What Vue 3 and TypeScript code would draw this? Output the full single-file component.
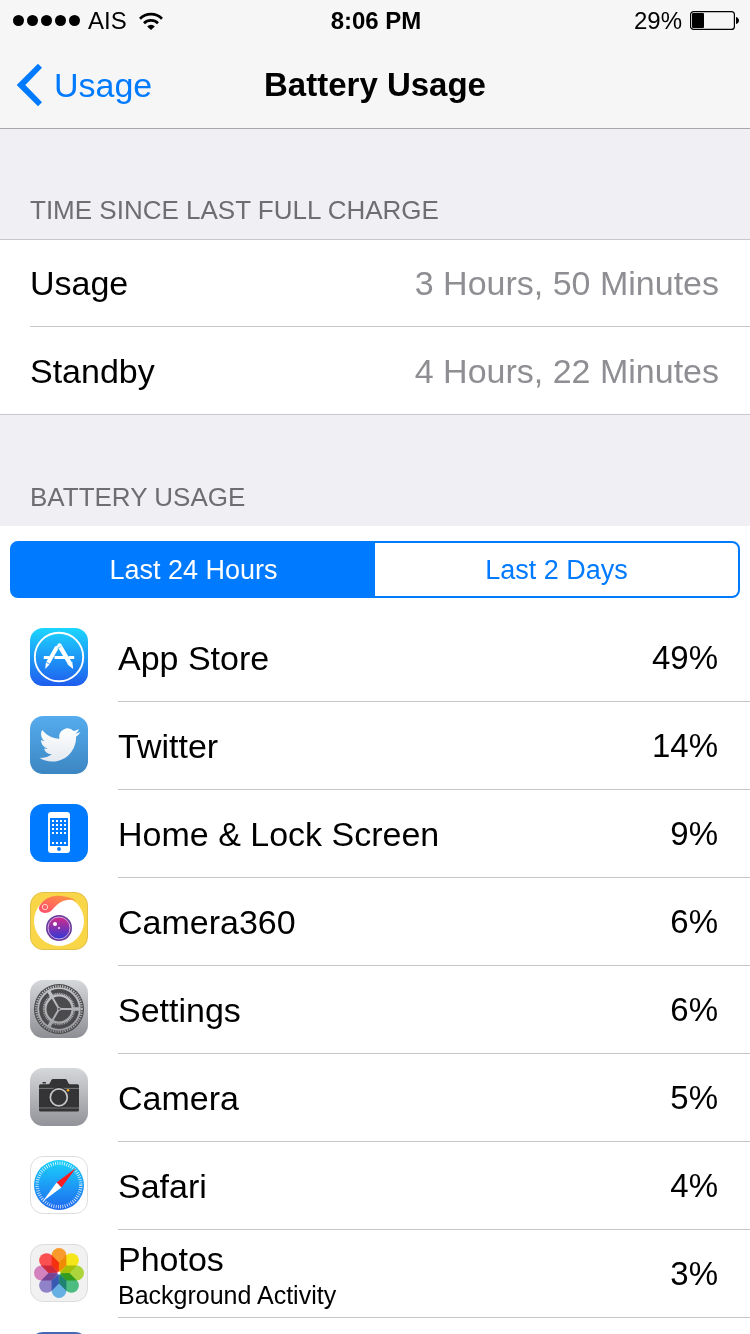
<script setup lang="ts">
import { ref } from 'vue'

type IconName =
  | 'appstore' | 'twitter' | 'homelock' | 'camera360' | 'settings'
  | 'camera' | 'safari' | 'photos' | 'blue'

interface AppUsage {
  icon: IconName
  name?: string
  note?: string
  percent?: number
}

const times = [
  { label: 'Usage', value: '3 Hours, 50 Minutes' },
  { label: 'Standby', value: '4 Hours, 22 Minutes' },
]

const ranges = ['Last 24 Hours', 'Last 2 Days']
const activeRange = ref(0)

const apps: AppUsage[] = [
  { icon: 'appstore', name: 'App Store', percent: 49 },
  { icon: 'twitter', name: 'Twitter', percent: 14 },
  { icon: 'homelock', name: 'Home & Lock Screen', percent: 9 },
  { icon: 'camera360', name: 'Camera360', percent: 6 },
  { icon: 'settings', name: 'Settings', percent: 6 },
  { icon: 'camera', name: 'Camera', percent: 5 },
  { icon: 'safari', name: 'Safari', percent: 4 },
  { icon: 'photos', name: 'Photos', note: 'Background Activity', percent: 3 },
  { icon: 'blue' },
]

const petals = ['#f99a2c', '#f5e61a', '#acd53c', '#4cbc80', '#66b0e4', '#8f82c8', '#d382bd', '#fb5052']
const dotColumns = [22, 26, 30, 34]
const dotRows = [16, 20, 24, 28, 38]
</script>

<template>
  <div class="screen">
    <header class="top">
      <div class="status">
        <div class="carrier">
          <span class="signal"><i v-for="n in 5" :key="n" class="dot"></i></span>
          <span>AIS</span>
          <svg class="wifi" width="24" height="18" viewBox="0 0 24 18" aria-hidden="true">
            <path d="M1 6.8A15.5 15.5 0 0 1 23 6.8M5 11.2A10 10 0 0 1 19 11.2" fill="none" stroke="#000" stroke-width="2.7" />
            <path d="M8.2 14.4A5.4 5.4 0 0 1 15.8 14.4L12 18Z" />
          </svg>
        </div>
        <strong class="clock">8:06 PM</strong>
        <div class="charge">
          <span>29%</span>
          <svg width="49" height="19" viewBox="0 0 49 19" aria-hidden="true">
            <rect x="0.6" y="0.6" width="43.8" height="17.8" rx="3" fill="none" stroke="#000" stroke-width="1.2" />
            <rect x="2" y="2" width="12" height="15" rx="1" />
            <path d="M46 6C50 7 50 12 46 13Z" />
          </svg>
        </div>
      </div>
      <nav class="nav">
        <a class="back" href="#">
          <svg width="28" height="44" viewBox="0 0 28 44" aria-hidden="true">
            <path d="M22 0.7L26 4.7L9.3 22L26 39.3L22 43.3L0.7 22Z" fill="#007aff" />
          </svg>
          <span>Usage</span>
        </a>
        <h1 class="title">Battery Usage</h1>
      </nav>
    </header>

    <main>
      <h2 class="caption">TIME SINCE LAST FULL CHARGE</h2>
      <dl class="times">
        <div v-for="t in times" :key="t.label" class="time">
          <dt>{{ t.label }}</dt>
          <dd>{{ t.value }}</dd>
        </div>
      </dl>

      <h2 class="caption">BATTERY USAGE</h2>
      <section class="usage">
        <div class="segments">
          <button
            v-for="(r, i) in ranges"
            :key="r"
            type="button"
            :class="['segment', { active: i === activeRange }]"
            :aria-pressed="i === activeRange"
            @click="activeRange = i"
          >{{ r }}</button>
        </div>

        <ul class="apps">
          <li v-for="app in apps" :key="app.icon" class="app">
            <svg class="icon" width="58" height="58" viewBox="0 0 58 58" aria-hidden="true">
              <template v-if="app.icon === 'appstore'">
                <defs>
                  <linearGradient id="g-store" x1="0" y1="0" x2="0" y2="1">
                    <stop offset="0" stop-color="#1cd6fe" /><stop offset="1" stop-color="#1f5cee" />
                  </linearGradient>
                </defs>
                <rect width="58" height="58" rx="13" fill="url(#g-store)" />
                <circle cx="29" cy="29" r="24.2" fill="none" stroke="#fff" stroke-width="1.9" />
                <g stroke="#fff" fill="#fff">
                  <path d="M13.8 29.5H19.4M24.5 29.5H35M38.6 29.5H44.2" fill="none" stroke-width="3" />
                  <path d="M26.4 20L17.8 35.2" fill="none" stroke-width="4" />
                  <circle cx="26.6" cy="19.8" r="2" stroke="none" />
                  <path d="M15.9 34.6L19.5 36.6L15.2 41Z" stroke="none" />
                  <path d="M29.5 17.6L40 35.6" fill="none" stroke-width="4.4" />
                  <circle cx="29.5" cy="17.4" r="2.2" stroke="none" />
                  <path d="M37.6 36.4L42.2 33.6L43.2 41Z" stroke="none" />
                </g>
                <path d="M16.2 34L19.8 36" stroke="#1c86f6" stroke-width="0.6" />
                <path d="M27.4 20.4L31.4 18.2" stroke="#1cb4fb" stroke-width="0.6" />
              </template>

              <template v-else-if="app.icon === 'twitter'">
                <defs>
                  <linearGradient id="g-tw" x1="0" y1="0" x2="0" y2="1">
                    <stop offset="0" stop-color="#55acee" /><stop offset="1" stop-color="#3c86c2" />
                  </linearGradient>
                  <linearGradient id="g-bird" x1="0" y1="0" x2="0" y2="1">
                    <stop offset="0" stop-color="#fff" /><stop offset="1" stop-color="#e4eaf0" />
                  </linearGradient>
                </defs>
                <rect width="58" height="58" rx="13" fill="url(#g-tw)" />
                <path
                  fill="url(#g-bird)"
                  transform="translate(9.4 8.6) scale(1.7)"
                  d="M23.953 4.57a10 10 0 01-2.825.775 4.958 4.958 0 002.163-2.723c-.951.555-2.005.959-3.127 1.184a4.92 4.92 0 00-8.384 4.482C7.69 8.095 4.067 6.13 1.64 3.162a4.822 4.822 0 00-.666 2.475c0 1.71.87 3.213 2.188 4.096a4.904 4.904 0 01-2.228-.616v.06a4.923 4.923 0 003.946 4.827 4.996 4.996 0 01-2.212.085 4.936 4.936 0 004.604 3.417 9.867 9.867 0 01-6.102 2.105c-.39 0-.779-.023-1.17-.067a13.995 13.995 0 007.557 2.209c9.053 0 13.998-7.496 13.998-13.985 0-.21 0-.42-.015-.63A9.935 9.935 0 0024 4.59z"
                />
              </template>

              <template v-else-if="app.icon === 'homelock'">
                <rect width="58" height="58" rx="13" fill="#007aff" />
                <rect x="18" y="8" width="22" height="41" rx="3" fill="#fff" />
                <rect x="20" y="14" width="18" height="28" fill="#007aff" />
                <template v-for="y in dotRows" :key="y">
                  <rect v-for="x in dotColumns" :key="x" :x="x" :y="y" width="2" height="2" fill="#fff" />
                </template>
                <circle cx="29" cy="45" r="1.9" fill="#007aff" />
              </template>

              <template v-else-if="app.icon === 'camera360'">
                <defs>
                  <linearGradient id="g-swoosh" x1="0" y1="1" x2="1" y2="0">
                    <stop offset="0" stop-color="#ff4a6c" /><stop offset="1" stop-color="#ff9c3c" />
                  </linearGradient>
                  <linearGradient id="g-lens" x1="0" y1="0" x2="0" y2="1">
                    <stop offset="0" stop-color="#d42c88" /><stop offset="1" stop-color="#2f38d8" />
                  </linearGradient>
                </defs>
                <rect x="0.5" y="0.5" width="57" height="57" rx="12.5" fill="#f9d548" stroke="#e2c047" />
                <circle cx="29" cy="29" r="25" fill="#fff" />
                <path d="M9 15.2C12 8 20 3.6 29 3.8C36 4 42 5.8 46.5 9C38 6.2 31.5 8.6 26.5 13.2C23 16.4 21.6 19.6 17.6 20.6C12.6 21.8 8.4 19 9 15.2Z" fill="url(#g-swoosh)" />
                <circle cx="15" cy="15" r="2.7" fill="none" stroke="#ffd0cc" stroke-width="1" />
                <circle cx="29" cy="36" r="13" fill="#6a3c9c" />
                <circle cx="29" cy="36" r="11" fill="url(#g-lens)" stroke="#d9b4e6" stroke-width="0.9" />
                <circle cx="25" cy="32" r="2" fill="#fff" />
                <circle cx="29" cy="36" r="1" fill="#ffd9f0" />
              </template>

              <template v-else-if="app.icon === 'settings'">
                <defs>
                  <linearGradient id="g-set" x1="0" y1="0" x2="0" y2="1">
                    <stop offset="0" stop-color="#d6d7db" /><stop offset="1" stop-color="#8e8f94" />
                  </linearGradient>
                  <linearGradient id="g-spoke" gradientUnits="userSpaceOnUse" x1="0" y1="0" x2="0" y2="58">
                    <stop offset="0" stop-color="#cccdd0" /><stop offset="1" stop-color="#97989c" />
                  </linearGradient>
                </defs>
                <rect width="58" height="58" rx="13" fill="url(#g-set)" />
                <circle cx="29" cy="29" r="25" fill="#4b4b4d" />
                <g fill="none" stroke="url(#g-spoke)">
                  <circle cx="29" cy="29" r="22.8" stroke-width="2.2" stroke-dasharray="1.2 1.19" />
                  <circle cx="29" cy="29" r="20.8" stroke-width="1.8" />
                  <circle cx="29" cy="29" r="15.4" stroke-width="1.6" stroke-dasharray="0.9 0.9" />
                  <circle cx="29" cy="29" r="13.6" stroke-width="2.2" />
                  <path d="M29 29H49.5M29 29L18.8 11.3M29 29L18.8 46.7" stroke-width="2" />
                  <path d="M42 29H49.5M22.5 17.7L18.8 11.3M22.5 40.3L18.8 46.7" stroke-width="3.4" />
                </g>
                <circle cx="29" cy="29" r="2" fill="#aeafb2" />
                <circle cx="29" cy="29" r="1" fill="#4b4b4d" />
              </template>

              <template v-else-if="app.icon === 'camera'">
                <defs>
                  <linearGradient id="g-cam" x1="0" y1="0" x2="0" y2="1">
                    <stop offset="0" stop-color="#d6d7da" /><stop offset="1" stop-color="#929398" />
                  </linearGradient>
                </defs>
                <rect width="58" height="58" rx="13" fill="url(#g-cam)" />
                <path d="M12.5 15.6V14.6Q12.5 14 13.2 14H15.4Q16 14 16 14.6V15.6Z" fill="#333" />
                <path d="M10.5 16.2H18.5C20.5 16 20.8 11 22.8 11H35.4C37.4 11 37.8 16 39.8 16.2H47.5Q49 16.2 49 17.7V42Q49 43.6 47.5 43.6H10.5Q9 43.6 9 42V17.7Q9 16.2 10.5 16.2Z" fill="#343436" />
                <path d="M9 20.4H49M9 40H49" stroke="#98999c" stroke-width="0.7" />
                <circle cx="28.8" cy="29.4" r="10.4" fill="#2c2c2e" />
                <circle cx="28.8" cy="29.4" r="8.5" fill="#343436" stroke="#c4c5c8" stroke-width="1.7" />
                <circle cx="38" cy="22.2" r="1.3" fill="#fcaf17" />
              </template>

              <template v-else-if="app.icon === 'safari'">
                <defs>
                  <linearGradient id="g-saf" x1="0" y1="0" x2="0" y2="1">
                    <stop offset="0" stop-color="#1bd2fc" /><stop offset="1" stop-color="#1e68ef" />
                  </linearGradient>
                </defs>
                <rect x="0.5" y="0.5" width="57" height="57" rx="12.5" fill="#fff" stroke="#dedede" />
                <circle cx="29" cy="29" r="25" fill="url(#g-saf)" />
                <circle cx="29" cy="29" r="21.8" fill="none" stroke="#fff" stroke-opacity="0.85" stroke-width="3.4" stroke-dasharray="0.8 1.483" />
                <path d="M46 12L31.4 31.4L26.6 26.6Z" fill="#fb1c20" />
                <path d="M12.6 45.4L26.6 26.6L31.4 31.4Z" fill="#fff" />
              </template>

              <template v-else-if="app.icon === 'photos'">
                <rect x="0.5" y="0.5" width="57" height="57" rx="12.5" fill="#f1f1f1" stroke="#dcdcdc" />
                <g class="flower" transform="translate(29 29)">
                  <path
                    v-for="(color, i) in petals"
                    :key="color"
                    class="petal"
                    :fill="color"
                    :transform="`rotate(${i * 45})`"
                    d="M-7.4 -17.6A7.4 7.4 0 0 1 7.4 -17.6V-7.4L0 -0.4L-7.4 -7.4Z"
                  />
                </g>
                <circle cx="29" cy="29" r="1.6" fill="#fff" />
              </template>

              <rect v-else width="58" height="58" rx="13" fill="#4468b4" />
            </svg>
            <div class="detail">
              <div class="names">
                <span v-if="app.name" class="name">{{ app.name }}</span>
                <small v-if="app.note" class="note">{{ app.note }}</small>
              </div>
              <span v-if="app.percent" class="percent">{{ app.percent }}%</span>
            </div>
          </li>
        </ul>
      </section>
    </main>
  </div>
</template>

<style>
html,
body {
  background: #efeff4;
}
</style>

<style scoped>
.screen {
  height: 100vh;
  overflow: hidden;
  background: #efeff4;
  color: #000;
  font-family: "Liberation Sans", Arial, Helvetica, sans-serif;
  font-size: 34px;
  line-height: 40px;
}

.top {
  background: #f6f6f6;
  border-bottom: 1px solid #a7a7aa;
}

.status {
  display: grid;
  grid-template-columns: 1fr auto 1fr;
  align-items: center;
  height: 41px;
  padding: 0 11px 0 13px;
  font-size: 24px;
}

.carrier,
.charge,
.signal {
  display: flex;
  align-items: center;
}

.carrier {
  gap: 8px;
}

.wifi {
  margin-left: 4px;
}

.signal {
  gap: 3px;
}

.dot {
  width: 11px;
  height: 11px;
  border-radius: 50%;
  background: #000;
}

.charge {
  justify-content: flex-end;
  gap: 8px;
}

.nav {
  display: grid;
  grid-template-columns: 1fr auto 1fr;
  align-items: center;
  height: 87px;
  padding: 0 16px;
}

.back {
  display: flex;
  align-items: center;
  gap: 10px;
  color: #007aff;
  text-decoration: none;
}

.title {
  margin: 0;
  font-size: 33px;
  font-weight: bold;
  line-height: 42px;
}

.caption {
  margin: 0;
  padding: 64px 30px 12px;
  color: #6d6d72;
  font-size: 26px;
  font-weight: normal;
  line-height: 34px;
}

.times + .caption {
  padding-top: 65px;
}

.times {
  margin: 0;
  padding-left: 30px;
  background: #fff;
  border-top: 1px solid #c8c7cc;
  border-bottom: 1px solid #c8c7cc;
}

.time {
  display: flex;
  align-items: center;
  justify-content: space-between;
  height: 86px;
  padding-right: 31px;
}

.time + .time {
  height: 87px;
  border-top: 1px solid #c8c7cc;
}

.time dd {
  margin: 0;
  color: #8e8e93;
}

.usage {
  background: #fff;
  padding-top: 15px;
}

.segments {
  display: flex;
  height: 57px;
  box-sizing: border-box;
  margin: 0 10px 16px;
  border: 2px solid #007aff;
  border-radius: 8px;
  background: #007aff;
  overflow: hidden;
}

.segment {
  flex: 1;
  padding: 0;
  border: 0;
  background: #fff;
  color: #007aff;
  font: inherit;
  font-size: 27px;
}

.segment.active {
  background: #007aff;
  color: #fff;
}

.apps {
  margin: 0;
  padding: 0 0 0 30px;
  list-style: none;
}

.app {
  display: flex;
  align-items: flex-start;
  gap: 30px;
}

.icon {
  flex: none;
  margin-top: 14px;
}

.detail {
  flex: 1;
  display: flex;
  align-items: center;
  justify-content: space-between;
  height: 87px;
  padding-right: 32px;
  border-bottom: 1px solid #c8c7cc;
}

.names {
  display: flex;
  flex-direction: column;
}

.note {
  padding-top: 2px;
  font-size: 25px;
  line-height: 28px;
}

.percent {
  font-size: 33px;
}

.flower {
  isolation: isolate;
}

.petal {
  mix-blend-mode: multiply;
}
</style>
